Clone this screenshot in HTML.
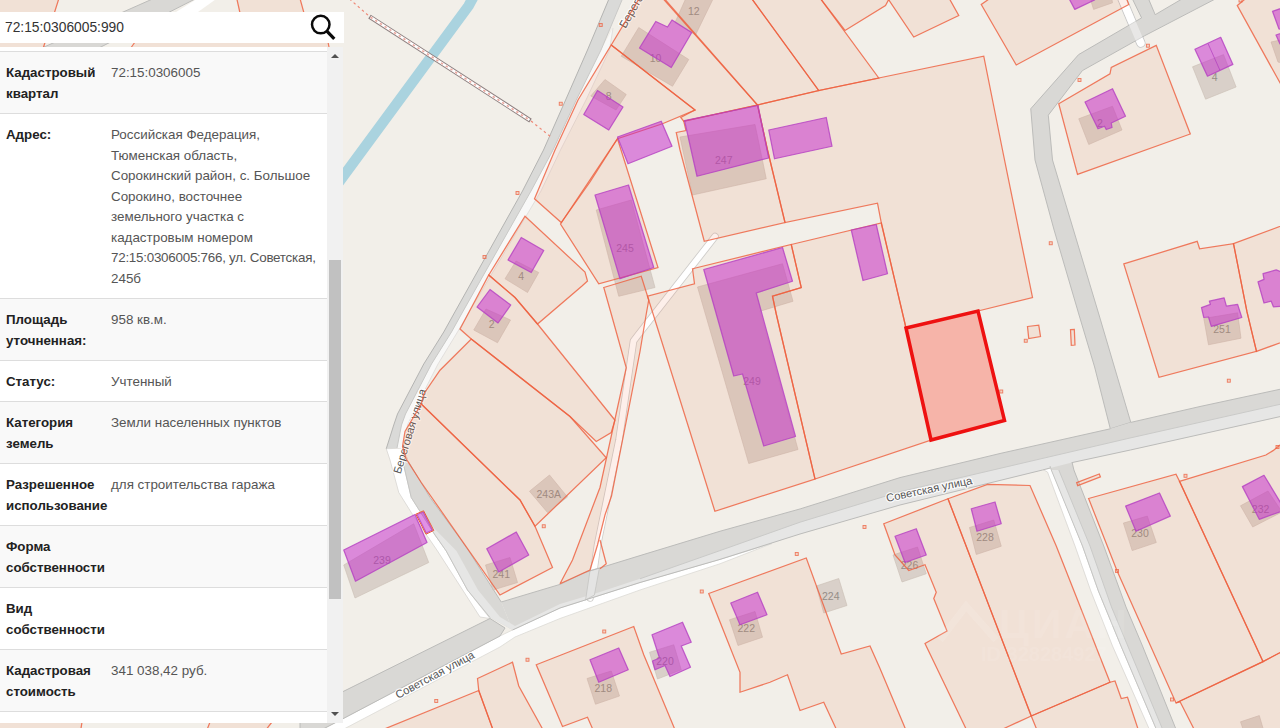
<!DOCTYPE html>
<html lang="ru"><head><meta charset="utf-8"><title>Кадастровая карта</title>
<style>
html,body{margin:0;padding:0;width:1280px;height:728px;overflow:hidden;background:#f2efe9;font-family:"Liberation Sans",sans-serif}
#map{position:absolute;left:0;top:0;width:1280px;height:728px;display:block}
#search{position:absolute;left:0;top:12px;width:344px;height:30.7px;background:#fff}
#search .q{position:absolute;left:5px;top:0;line-height:31px;font-size:13.8px;color:#333}
#search svg{position:absolute;left:308px;top:1px}
#panel{position:absolute;left:0;top:47px;width:343px;height:676px;background:#fff;overflow:hidden}
#rows{position:absolute;left:0;top:4px;width:327px}
.r{border-top:1px solid #ddd;padding:11.2px 0 8.8px 6px;display:flex;font-size:13.4px;line-height:20.5px;color:#555}
.r.s{background:#f9f9f9}
.r b{display:block;width:105px;flex:none;color:#222;font-size:13.3px}
.r span{display:block;width:212px;white-space:nowrap}
#sb{position:absolute;left:327px;top:0;width:16px;height:676px;background:#f1f1f1}
#sb i{position:absolute;left:2px;width:12px;top:213px;height:339px;background:#c1c1c1}
#sb:before{content:"";position:absolute;left:4px;top:7px;border:4px solid transparent;border-top:0;border-bottom:4px solid #505050}
#sb:after{content:"";position:absolute;left:4px;bottom:7px;border:4px solid transparent;border-bottom:0;border-top:4px solid #505050}
</style></head><body>
<svg id="map" viewBox="0 0 1280 728" width="1280" height="728">
<rect width="1280" height="728" fill="#f2efe9"/>
<g id="water"><polyline points="476,-8 468.5,6 343.75,175.6 300,235" fill="none" stroke="#aad3df" stroke-width="10.5" stroke-linejoin="round"/></g>
<g id="roads"><polygon points="386.25,448.75 390,460 398.75,492.5 411.25,512.5 437.5,551 480,617 490,618.5 467.5,590 446.25,551 435,535 411.25,497.5 402.5,460 403.75,448" fill="#ffffff" stroke="#d8d6d2" stroke-width="0.8" stroke-linejoin="round"/><polygon points="300,741 343,718.7 500,636 512.5,630 560,608 640,582.5 720,559.4 772,543.5 720,563.75 640,590 560,618.5 515,637 500,647 343,729.5 300,752" fill="#ffffff" stroke="#dcdad6" stroke-width="0.8" stroke-linejoin="round"/><polygon points="1040,468 1046.6,469 1051.3,468 1082.5,546 1098.4,591 1121,646 1155.8,728 1160,740 1152,740 1148.75,728 1112.5,646 1090.8,591 1075,546 1047.5,472" fill="#ffffff" stroke="#d8d6d2" stroke-width="0.8" stroke-linejoin="round"/><polyline points="1120.5,-5 1140.8,43" fill="none" stroke="#c9c9c9" stroke-width="9.5" stroke-linecap="round"/><polyline points="1120.5,-5 1140.8,43" fill="none" stroke="#ffffff" stroke-width="7.6" stroke-linecap="round"/><polyline points="715,236.5 638,335 633.5,341 619,440 597.5,545 590,598" fill="none" stroke="#cfcdca" stroke-width="7.5" stroke-linejoin="round" stroke-linecap="round"/><polyline points="715,236.5 638,335 633.5,341 619,440 597.5,545 590,598" fill="none" stroke="#ffffff" stroke-width="5.8" stroke-linejoin="round" stroke-linecap="round"/><polygon points="35,51 93,51 199,-3 157,-3" fill="#d9d8d5" stroke="#bcbcba" stroke-width="1" stroke-linejoin="round"/><polygon points="176,12 200,-3 219,-3 198,12" fill="#ffffff"/><polygon points="1131,-4 1141.6,17.9 1078.6,54.6 1030.75,108.75 1035,160 1054.1,230 1078.75,314 1094.6,367 1110.3,428.8 1130.8,422.4 1114.4,367 1098.75,314 1073.5,230 1052.5,160 1048.3,115.2 1082.4,70.6 1144.5,35.8 1221,-4 1187,-4 1155.2,14.7 1147.3,-4" fill="#d9d8d5" stroke="#bcbcba" stroke-width="1" stroke-linejoin="round"/><polygon points="300,713 343,691.6 490,618.5 505,628 500,636 343,718.7 300,741" fill="#d9d8d5" stroke="#bcbcba" stroke-width="1" stroke-linejoin="round"/><polygon points="501.25,602 560,584.4 585,572.5 640,555.6 720,531.25 800.2,508.9 900,477.6 1000,453.5 1110.3,428.8 1130.8,422.4 1200,406.5 1285,388.2 1285,415.5 1130.4,450 1072,462.6 1042.5,470 900,505 800,534 720,559.4 640,582.5 560,608 512.5,630" fill="#d9d8d5"/><polygon points="403.75,448 407.5,460 430,497.5 457.5,535 468.75,551 501.25,602 512.5,630 490,617.5 467.5,590 446.25,551 435,535 411.25,497.5 402.5,460" fill="#d9d8d5"/><polygon points="1072,462 1073.9,470 1103.75,546 1126,607 1142.5,646 1175.5,728 1180,740 1160,740 1155.8,728 1121,646 1098.4,591 1082.5,546 1051.3,470 1050,466" fill="#d9d8d5"/><polygon points="601,50 576.25,100 553,150 531,191 461.5,314 451.5,332 431.5,364 405.5,414 401.5,425 397,448 403.75,448 407.5,425 412.5,414 438,364 457.5,332 468,314 541,191 560.5,150 586,100 609.5,50 613,28 613,28" fill="#f8f8f7"/><polygon points="611,-6 608.5,0 587.5,50 565.6,100 543.5,150 522.5,191 453.75,314 443.75,332 423.75,364 397.5,414 393.75,425 386.25,448.75 397,448 401.5,425 405.5,414 431.5,364 451.5,332 461.5,314 531,191 553,150 576.25,100 601,50 622,0 624.5,-6" fill="#dadad8"/><polygon points="425,519 456.5,551 478,590 500,617 515,626 560,604 600,592 640,578.75 720,550.6 800,522.2 900,491.7 1130,438 1285,403.2 1285,415.5 1130.4,450 1072,462.6 1042.5,470 900,505 800,534 720,559.4 640,582.5 560,608 512.5,630 490,617.5 467.5,590 446.25,551" fill="#e6e6e5"/><polygon points="1051.3,470 1058.8,470 1090,546 1111.5,607 1165,735 1157,735 1155.8,728 1121,646 1098.4,591 1082.5,546" fill="#e6e6e5"/><polygon points="590,570.6 599.4,568 594.4,595 585.6,600" fill="#e4e4e3" stroke="#c4c4c2" stroke-width="0.8" stroke-linejoin="round"/><polyline points="501.25,602 560,584.4 585,572.5 640,555.6 720,531.25 800.2,508.9 900,477.6 1000,453.5 1110.3,428.8" fill="none" stroke="#bcbcba" stroke-width="1" stroke-linejoin="round"/><polyline points="1130.8,422.4 1200,406.5 1285,388.2" fill="none" stroke="#bcbcba" stroke-width="1" stroke-linejoin="round"/><polyline points="1285,415.5 1130.4,450 1072,462.6" fill="none" stroke="#bcbcba" stroke-width="1" stroke-linejoin="round"/><polyline points="1050,468 1042.5,470 900,505 800,534 720,559.4 640,582.5 560,608 512.5,630" fill="none" stroke="#bcbcba" stroke-width="1" stroke-linejoin="round"/><polyline points="640,578.75 720,550.6 800,522.2 900,491.7 1130,438 1285,403.2" fill="none" stroke="#cacac8" stroke-width="1" stroke-linejoin="round"/><polyline points="403.75,448 407.5,460 430,497.5 457.5,535 468.75,551 501.25,602" fill="none" stroke="#bcbcba" stroke-width="1" stroke-linejoin="round"/><polyline points="490,617.5 467.5,590 446.25,551 435,535 411.25,497.5 402.5,460 403.75,448" fill="none" stroke="#c6c6c4" stroke-width="1" stroke-linejoin="round"/><polyline points="1072,462 1073.9,470 1103.75,546 1126,607 1142.5,646 1175.5,728 1180,740" fill="none" stroke="#bcbcba" stroke-width="1" stroke-linejoin="round"/><polyline points="1160,740 1155.8,728 1121,646 1098.4,591 1082.5,546 1051.3,470 1050,466" fill="none" stroke="#c6c6c4" stroke-width="1" stroke-linejoin="round"/><polyline points="1058.8,470 1090,546 1111.5,607 1165,735" fill="none" stroke="#cacac8" stroke-width="1" stroke-linejoin="round"/><polyline points="611,-6 608.5,0 587.5,50 565.6,100 543.5,150 522.5,191 453.75,314 443.75,332 423.75,364 397.5,414 393.75,425 386.25,448.75" fill="none" stroke="#b4b4b2" stroke-width="1" stroke-linejoin="round"/><polyline points="624.5,-6 622,0 601,50 576.25,100 553,150 531,191 461.5,314 451.5,332 431.5,364 405.5,414 401.5,425 397,448" fill="none" stroke="#c9c9c7" stroke-width="1" stroke-linejoin="round"/><polyline points="613,28 609.5,50 586,100 560.5,150 541,191 468,314 457.5,332 438,364 412.5,414 407.5,425 403.75,448" fill="none" stroke="#dddbd8" stroke-width="0.8" stroke-linejoin="round"/><path d="M349.5,-1 L369,16 M531,121 L551,137" stroke="#ee8877" stroke-width="1.2" stroke-dasharray="2.5,3" fill="none"/><line x1="369.5" y1="16.6" x2="530.5" y2="120.6" stroke="#8d7f7f" stroke-width="4.6"/><line x1="370.5" y1="17.2" x2="529.5" y2="120" stroke="#ffffff" stroke-width="2.6"/><line x1="370.5" y1="17.2" x2="529.5" y2="120" stroke="#eea9a0" stroke-width="1.6" stroke-dasharray="2.4,3.2"/><polyline points="1120.5,-5 1140.8,43" fill="none" stroke="#ffffff" stroke-opacity="0.4" stroke-width="7.6" stroke-linecap="round"/></g>
<g id="osmb" fill="#d9d0c9" stroke="#c9bdb4" stroke-width="0.6"><polygon points="605,79.5 626.25,94.5 616,110 590.75,96" /><polygon points="638.75,27.5 688.75,59.5 672.5,86.25 621.25,56.25" /><polygon points="686.25,-2.5 713.75,-2.5 695.5,35 675,22.5" /><polygon points="680,137 755,124.5 766.25,178.75 692.5,195" /><polygon points="596.25,210 631.25,200 655,287.5 618.75,296.25" /><polygon points="505,278.75 516,261 538.75,272.5 527.5,292.5" /><polygon points="473.75,330 486,309 510.5,320 497.5,342.75" /><polygon points="529.5,491.25 549.5,475 567.5,497 547.5,512.5" /><polygon points="485.5,565 510,557.5 517.5,582.5 493,590" /><polygon points="343.75,565 413.75,523.75 428.75,562.5 355,598" /><polygon points="697.5,287 782.5,263.75 793,301.25 760,311.25 798,449.5 748.75,463.5" /><polygon points="1078.75,118.75 1112.5,106.25 1122,130 1088.75,144.5" /><polygon points="1192.5,66.8 1223.5,54.6 1236.1,87 1205.6,99.2" /><polygon points="1091.8,3.8 1093.6,9.4 1112.5,2.8 1111.5,-3 1090,-3" /><polygon points="1271,42 1285,39 1285,64 1278,62" /><polygon points="1203.8,318.5 1237.6,312.8 1241,338.2 1208.5,344.8" /><polygon points="587,678.5 611.25,671 619.5,696 595.5,704.25" /><polygon points="649.5,652.25 673.75,644.75 681.25,669.75 657.5,679" /><polygon points="729.5,619.75 755,611.5 762.5,637.25 738,645.5" /><polygon points="816.25,586 838.75,578.5 847,605.5 823.75,613" /><polygon points="893,555 917.5,547 926.25,573.75 902,582" /><polygon points="969.5,527.5 993.75,520 1001.25,546.25 976.25,554.5" /><polygon points="1123.4,523.1 1147.3,516.1 1156.3,542.5 1132.2,550.6" /><polygon points="1240.5,505.8 1268,491 1282,512 1252.7,527" /><polygon points="1240.5,721.8 1259.3,715.6 1265,735 1245,735" /></g>
<g id="labels"><text x="723.75" y="163.6" text-anchor="middle" font-size="10.5" fill="#958d87">247</text><text x="625" y="252.35" text-anchor="middle" font-size="10.5" fill="#958d87">245</text><text x="752" y="384.6" text-anchor="middle" font-size="10.5" fill="#958d87">249</text><text x="655.5" y="62.35" text-anchor="middle" font-size="10.5" fill="#958d87">10</text><text x="693.75" y="14.85" text-anchor="middle" font-size="10.5" fill="#958d87">12</text><text x="608.75" y="99.85" text-anchor="middle" font-size="10.5" fill="#958d87">8</text><text x="521.25" y="279.85" text-anchor="middle" font-size="10.5" fill="#958d87">4</text><text x="491.75" y="327.85" text-anchor="middle" font-size="10.5" fill="#958d87">2</text><text x="548.75" y="498.1" text-anchor="middle" font-size="10.5" fill="#958d87">243А</text><text x="501.25" y="578.1" text-anchor="middle" font-size="10.5" fill="#958d87">241</text><text x="382" y="564.1" text-anchor="middle" font-size="10.5" fill="#958d87">239</text><text x="603.25" y="692.1" text-anchor="middle" font-size="10.5" fill="#958d87">218</text><text x="665" y="665.1" text-anchor="middle" font-size="10.5" fill="#958d87">220</text><text x="746.25" y="632.1" text-anchor="middle" font-size="10.5" fill="#958d87">222</text><text x="830.75" y="600.1" text-anchor="middle" font-size="10.5" fill="#958d87">224</text><text x="909.5" y="568.6" text-anchor="middle" font-size="10.5" fill="#958d87">226</text><text x="985" y="541.1" text-anchor="middle" font-size="10.5" fill="#958d87">228</text><text x="1140" y="537.35" text-anchor="middle" font-size="10.5" fill="#958d87">230</text><text x="1260.6" y="512.6" text-anchor="middle" font-size="10.5" fill="#958d87">232</text><text x="1222" y="333.0" text-anchor="middle" font-size="10.5" fill="#958d87">251</text><text x="1100" y="127.35" text-anchor="middle" font-size="10.5" fill="#958d87">2</text><text x="1214.7" y="80.8" text-anchor="middle" font-size="10.5" fill="#958d87">4</text><text transform="translate(400.5,474.5) rotate(-73)" font-size="11.2" fill="#555" stroke="#ffffff" stroke-width="2.4" stroke-linejoin="round" paint-order="stroke" stroke-opacity="0.9">Береговая улица</text><text transform="translate(625.5,29) rotate(-60)" font-size="11.4" fill="#555" stroke="#ffffff" stroke-width="2.4" stroke-linejoin="round" paint-order="stroke" stroke-opacity="0.9">Береговая улица</text><text transform="translate(398,699) rotate(-28.4)" font-size="11.2" fill="#555" stroke="#ffffff" stroke-width="2.4" stroke-linejoin="round" paint-order="stroke" stroke-opacity="0.9">Советская улица</text><text transform="translate(887,502) rotate(-11.9)" font-size="11.2" fill="#555" stroke="#ffffff" stroke-width="2.4" stroke-linejoin="round" paint-order="stroke" stroke-opacity="0.9">Советская улица</text></g>
<g id="parcels" fill="rgb(240,128,90)" fill-opacity="0.125" stroke="#ee6040" stroke-opacity="0.82" stroke-width="1.25" stroke-linejoin="miter" stroke-miterlimit="3"><polygon points="-5,-5 60,-5 42,52 -5,52" /><polygon points="236,-5 299,-5 304,13 240,13" /><polygon points="135,42 328,42 330,52 128,52" /><polygon points="-5,722 82,722 80,735 -5,735" /><polygon points="210,722 272,722 262,735 205,735" /><polygon points="611.25,45 695,110 662.5,123.75 617.5,138.75 590,182 561.25,222.5 534.5,198.75 555,150 578,100" /><polygon points="611.25,45 639.5,-2 662.5,-2 757.5,105 683.75,121.25 680.75,117.5 695,110" /><polygon points="663.75,-2 751.25,-2 818.75,90.5 757.5,105" /><polygon points="751.25,-2 820,-2 878.75,78 818.75,90.5" /><polygon points="820,-2 889.5,-2 885.5,5.5 845,30.5" /><polygon points="887.5,-2 913.75,37 958.75,15.5 949,-2" /><polygon points="981.25,4.5 1016.25,65 1128.75,4.5 1126.25,-2 990.5,-2" /><polygon points="757.5,105 818.75,90.5 878.75,78 983.75,56.25 1002.5,150 1032.5,297.5 978,311 906,328 881.25,222.5 877.5,203.25 785,222.5 767.5,150" /><polygon points="676.25,132.5 686,130.5 683.75,121.25 757.5,105 767.5,150 785,222.5 704.25,241.25 680,150" /><polygon points="791.25,244.5 881.25,223 906,328 931,440 815,479 776.25,314 772.5,296.25 801.25,287.5" /><polygon points="692.5,268.75 791.25,244.5 801.25,287.5 772.5,296.25 776.25,314 815,479 714.9,511.3 658.75,332 647.5,296.25 694.5,283.75" /><polygon points="617.5,138.75 658,267.5 598.75,283.75 560.5,224" /><polygon points="525,216.25 585,272 587.5,281 582,286 537.5,324 515,297.5 488.75,275" /><polygon points="488.75,275 515,297.5 537.5,324 615,420.25 611.25,432.5 596.25,441.5 570,416.5 471.25,339 460,329" /><polygon points="471.25,339 570,416.5 606.25,457.75 535,526.25 520,500 421.25,404 423.75,394 440,370.25" /><polygon points="421.25,404 520,500 535,526.25 552.5,567.5 500,595 421.25,482.5 406.25,459 402.5,446.5 405,431.5" /><polygon points="603.75,287.5 641.25,276.25 648.75,300 646.25,314 640,351.5 611.5,496 605,515 597.5,545 590,570 560,583.75 572.5,560 600,487.5 626.25,367.75 611.25,314" /><polygon points="1058.75,103.75 1110,73.75 1111.25,67.5 1156.25,45.4 1190.3,134 1077.5,174.4" /><polygon points="1123.8,263.9 1197.2,241.3 1199.6,248.8 1233.5,243.6 1247,311.9 1256.5,351.4 1159,377.3" /><polygon points="1233.5,243.6 1285,224.5 1285,341 1256.5,351.4 1247,311.9" /><polygon points="1237.3,5.6 1249.9,-5 1285,-5 1285,92 1280,82.8" /><polygon points="382.5,729.75 478.75,690.5 493,729.75" /><polygon points="477.5,678.5 512.5,662.25 518.75,686 543,729.75 493,729.75 478.75,690.5" /><polygon points="536.25,664.75 633.75,626.5 643.75,654.75 675,729.75 593,729.75 587.5,717.25 562.5,726.5" /><polygon points="708.75,593.5 806.25,558 841.25,654 870,646 880,668.5 908,735 839,735 823.75,702.25 800,710.5 787.5,674.75 770,682.25 740,692.25 740,672.25" /><polygon points="883.75,523.75 948,498.75 1031.25,716 1005,728 990,735 969,735 925,643.5 947,631 933.75,598.5 936.25,592.25 925,564.75 908.75,570.5 895,555" /><polygon points="948,498.75 987.5,484.5 1030,485.5 1056.25,546 1110,682.25 1031.25,716" /><polygon points="1031.25,716 1110,682.25 1115,681 1121.25,698.5 1127.5,697.25 1140,735 1039,735" /><polygon points="1088.6,498.5 1176,474.2 1179.5,481.3 1263,661.6 1176,703 1117,570.7" /><polygon points="1179.5,481.3 1265.9,455 1273.4,450.4 1277.5,447 1285,441 1285,650 1263,661.6" /><polygon points="1176,703 1263,661.6 1285,650 1285,735 1197,735 1180.2,702" /><polygon points="1027.5,326.5 1038.75,325.25 1040.5,336.5 1028.75,338.5" /><polygon points="1070.5,329.6 1074.3,329.4 1075,345 1071.3,345.3" /><polygon points="1076.7,482.6 1099.3,474 1100.4,476.8 1077.7,485.6" /></g>
<g id="plines" fill="none" stroke="#ee6040" stroke-opacity="0.82" stroke-width="1.25" stroke-linejoin="round"><polyline points="600,540 606.25,563.75 600,568.75" /></g>
<g id="markers" fill="rgb(240,128,90)" fill-opacity="0.25" stroke="#ee6040" stroke-opacity="0.8" stroke-width="0.9"><rect x="599.25" y="23.5" width="3" height="3"/><rect x="559.25" y="102.25" width="3" height="3"/><rect x="516" y="191.5" width="3" height="3"/><rect x="483" y="255.5" width="3" height="3"/><rect x="1078" y="78.5" width="3" height="3"/><rect x="1146.4" y="44.2" width="3" height="3"/><rect x="1239" y="-1" width="3" height="3"/><rect x="1049.25" y="241.75" width="3" height="3"/><rect x="1024.25" y="339.25" width="3" height="3"/><rect x="999.75" y="390" width="3" height="3"/><rect x="1227.3" y="379.2" width="3" height="3"/><rect x="1184" y="474.3" width="3" height="3"/><rect x="1276" y="445.5" width="3" height="3"/><rect x="542.25" y="524.75" width="3" height="3"/><rect x="700.25" y="590" width="3" height="3"/><rect x="795.25" y="552.5" width="3" height="3"/><rect x="602.75" y="630" width="3" height="3"/><rect x="1115.5" y="569.5" width="3" height="3"/><rect x="1170.5" y="698" width="3" height="3"/><rect x="526" y="658.25" width="3" height="3"/><rect x="434.75" y="699.5" width="3" height="3"/><rect x="863" y="525.5" width="3" height="3"/></g>
<g id="purple" fill="rgb(196,36,204)" fill-opacity="0.5" stroke="rgb(180,64,194)" stroke-opacity="0.8" stroke-width="1.25" stroke-linejoin="round"><polygon points="597.5,90.5 623,107 608.75,130 583.75,114.5" /><polygon points="639.5,48 655.75,21.5 667.5,27 672,20 691.75,32.5 671.25,67.5" /><polygon points="617.5,137 661.25,121.25 672,146.25 628,163.75" /><polygon points="684.5,120.5 758,105.5 768.75,158 697,176.25" /><polygon points="768.75,130 826.25,117.5 832,146.25 774.5,158.75" /><polygon points="595,195 628.5,185 653.75,267.5 620,278.75" /><polygon points="508,260 521.25,237.5 543.75,250.5 531.25,272.5" /><polygon points="477,307 490,289.5 510.75,305 498,323" /><polygon points="703.75,269.5 782.5,247.5 792.5,281.25 756.25,293 795.5,436.5 763.75,446 742.5,374 733.75,376" /><polygon points="851.25,230 876.25,224.5 887.5,273.75 863,280.5" /><polygon points="1085,102 1112.5,88.75 1125.5,116.25 1111.25,123 1112,127.5 1106.25,129.5 1104.5,126.25 1098,128.75" /><polygon points="1194.9,49.3 1220.7,37.3 1232.9,64.4 1207.5,76.2" /><polygon points="1068.2,-3 1074.8,9.4 1094.6,0 1094,-3" /><polygon points="1272.5,11.3 1285,7 1285,30 1279,29" /><polygon points="1276,35 1285,32 1285,45 1280,44" /><polygon points="1201.5,307.6 1210.4,304.4 1209.4,301.2 1224.1,297.8 1226.4,306.2 1237.6,304.4 1241.8,317.5 1211.3,326.4 1208.5,317 1203.8,317.5" /><polygon points="1258,281.8 1264,279.3 1263,273.7 1276.2,269.9 1285,273.3 1285,306.2 1273.4,306.8 1271.2,301.2 1264,303" /><polygon points="486.75,548.75 516.25,532 528.75,555 498.75,572" /><polygon points="343.75,550 415,514.5 427,542.5 355.5,581.25" /><polygon points="417,514.5 423.25,512 432.5,530 426.25,533" /><polygon points="590,659.75 618.75,648 628.25,669.75 598.75,682.25" /><polygon points="652,634.75 682.5,622.25 691.25,642.25 681.25,646 690.5,667.25 670,676.5 665,665.5 655,669.75 652.5,661 659.5,658" /><polygon points="730.75,603 757.5,592.25 767,614.75 740,624.75" /><polygon points="895,536.25 916.25,528.75 926.25,555 905,562.5" /><polygon points="971.25,508.75 995,502 1001.25,523.75 977,531.25" /><polygon points="1125.6,506.1 1159.5,493 1170.3,516.1 1136,531.2" /><polygon points="1242.4,486.6 1264,475.3 1285,510 1259.3,519.3" /></g>
<g id="extra"><polygon points="906,328 978,311 1004.5,420.5 931,440" fill="#f6b4a9" stroke="#ee1111" stroke-width="3.5" stroke-linejoin="miter"/><polygon points="415.8,514.2 423.6,510.8 433.8,530.4 426,534.2" fill="none" stroke="#ee5a3a" stroke-width="1"/><g fill="#ffffff" fill-opacity="0.11" font-weight="bold"><text x="999" y="638" font-size="41" letter-spacing="3">ЦИАН</text><text x="981" y="661" font-size="20">ID 328284927</text><path d="M940,640 L966,606 L996,640" fill="none" stroke="#ffffff" stroke-opacity="0.11" stroke-width="7"/></g><line x1="1208.1" y1="43.7" x2="1219.8" y2="70" stroke="rgb(176,60,190)" stroke-opacity="0.7" stroke-width="1"/></g>
</svg>
<div id="search"><div class="q">72:15:0306005:990</div>
<svg width="30" height="30" viewBox="0 0 30 30"><circle cx="12.75" cy="11.6" r="8.75" fill="none" stroke="#0a0a0a" stroke-width="2.5"/><path d="M18.6 17.8 L26.3 25.8" stroke="#0a0a0a" stroke-width="3.2"/></svg>
</div>
<div id="panel"><div id="rows">
<div class="r s"><b>Кадастровый квартал</b><span>72:15:0306005</span></div>
<div class="r"><b>Адрес:</b><span>Российская Федерация,<br>Тюменская область,<br>Сорокинский район, с. Большое<br>Сорокино, восточнее<br>земельного участка с<br>кадастровым номером<br><i style="font-style:normal;letter-spacing:-0.25px">72:15:0306005:766, ул. Советская,</i><br>245б</span></div>
<div class="r s"><b>Площадь уточненная:</b><span>958 кв.м.</span></div>
<div class="r" style="padding-bottom:8.3px"><b>Статус:</b><span>Учтенный</span></div>
<div class="r s"><b>Категория земель</b><span>Земли населенных пунктов</span></div>
<div class="r"><b>Разрешенное использование</b><span>для строительства гаража</span></div>
<div class="r s"><b>Форма собственности</b><span></span></div>
<div class="r"><b>Вид собственности</b><span></span></div>
<div class="r s"><b>Кадастровая стоимость</b><span>341 038,42 руб.</span></div>
<div class="r"><b>&nbsp;</b><span></span></div>
</div><div id="sb"><i></i></div></div>
</body></html>
